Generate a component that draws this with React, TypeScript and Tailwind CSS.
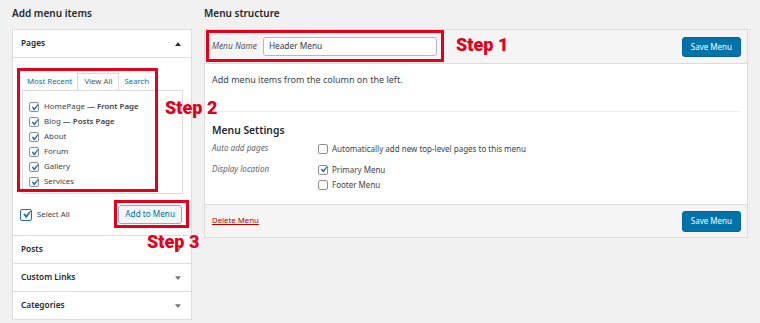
import React from 'react'

function Checkbox({ checked = false, big = false }: { checked?: boolean; big?: boolean }) {
  return (
    <span
      className={
        big
          ? 'relative inline-flex items-center justify-center w-[12px] h-[12px] border border-[#2271b1] rounded-[2px] bg-white shrink-0'
          : 'relative inline-flex items-center justify-center w-[10px] h-[10px] border border-[#8c8f94] rounded-[2px] bg-white shrink-0'
      }
    >
      {checked && (
        <svg viewBox="0 0 20 20" className={big ? 'absolute w-[15px] h-[15px]' : 'absolute w-[13px] h-[13px]'}>
          <path d="M14.83 4.89l1.34.94-5.81 8.38H9.02L5.78 9.67l1.34-1.25 2.57 2.4z" fill="#2271b1" />
        </svg>
      )}
    </span>
  )
}

function Caret({ up = false }: { up?: boolean }) {
  return (
    <svg viewBox="0 0 8 5" className="w-[6px] h-[4px]">
      {up ? <path d="M0 5L4 0L8 5Z" fill="#23282d" /> : <path d="M0 0L8 0L4 5Z" fill="#72777c" />}
    </svg>
  )
}

const pages = [
  { label: 'HomePage', suffix: 'Front Page' },
  { label: 'Blog', suffix: 'Posts Page' },
  { label: 'About' },
  { label: 'Forum' },
  { label: 'Gallery' },
  { label: 'Services' },
]

export default function App() {
  return (
    <div
      className="relative w-[760px] h-[323px] bg-[#f1f1f1] text-[#3c434a] overflow-hidden"
      style={{ fontFamily: '"Noto Sans", "Open Sans", sans-serif' }}
    >
      <div className="flex gap-[12px] pl-[12px]">
        {/* Left column */}
        <div className="w-[180px]">
          <h2 className="h-[29px] pt-[5px] text-[10px] leading-[16px] font-semibold text-[#23282d]">Add menu items</h2>
          <div className="border border-[#dcdcde] bg-white">
            <div className="h-[28px] flex items-center justify-between pl-[8px] pr-[10px] border-b border-[#dcdcde]">
              <span className="text-[8.3px] font-semibold text-[#23282d]">Pages</span>
              <Caret up />
            </div>
            <div className="pl-[9px] pt-[15px]">
              <div className="flex text-[7.8px] h-[17px] items-stretch">
                <span className="px-[5px] flex items-center text-[#0073aa]">Most Recent</span>
                <span className="px-[6px] flex items-center text-[#555] bg-white border border-b-0 border-[#dcdcde]">View All</span>
                <span className="px-[5px] flex items-center text-[#0073aa]">Search</span>
              </div>
              <div className="w-[161px] h-[104px] border border-[#dcdcde] pt-[11px] pl-[6px] flex flex-col gap-[5px]">
                {pages.map((p) => (
                  <div key={p.label} className="flex items-center gap-[5px] h-[10px] text-[7.9px]">
                    <Checkbox checked />
                    <span>
                      {p.label}
                      {p.suffix && <span className="font-semibold"> — {p.suffix}</span>}
                    </span>
                  </div>
                ))}
              </div>
            </div>
            <div className="flex items-center justify-between pl-[7px] pr-[9px] pt-[11px] pb-[11px]">
              <div className="flex items-center gap-[5px] text-[7.8px]">
                <Checkbox checked big />
                <span>Select All</span>
              </div>
              <button className="h-[19px] px-[6px] text-[8.2px] text-[#0071a1] bg-[#f3f5f6] border border-[#7fb2cf] rounded-[3px]">
                Add to Menu
              </button>
            </div>
            {['Posts', 'Custom Links', 'Categories'].map((t) => (
              <div key={t} className="h-[28px] flex items-center justify-between pl-[8px] pr-[10px] border-t border-[#dcdcde]">
                <span className="text-[8.3px] font-semibold text-[#23282d]">{t}</span>
                <Caret />
              </div>
            ))}
          </div>
        </div>

        {/* Right column */}
        <div className="w-[544px]">
          <h2 className="h-[29px] pt-[5px] text-[10px] leading-[16px] font-semibold text-[#23282d]">Menu structure</h2>
          <div className="border border-[#dcdcde] bg-white">
            <div className="h-[34px] flex items-center justify-between pl-[7px] pr-[6px] bg-[#f5f5f5] border-b border-[#dcdcde]">
              <div className="flex items-center gap-[6px]">
                <span className="text-[8.3px] italic text-[#555]">Menu Name</span>
                <div className="w-[174px] h-[19px] flex items-center px-[5px] bg-white border border-[#b4b9be] rounded-[3px] text-[8.3px] text-[#32373c]">
                  Header Menu
                </div>
              </div>
              <button className="h-[20px] px-[8px] text-[8px] text-white bg-[#0073aa] border border-[#006799] rounded-[3px]">
                Save Menu
              </button>
            </div>
            <div className="px-[7px]">
              <p className="pt-[10px] h-[47px] text-[9px] leading-[12px]">Add menu items from the column on the left.</p>
              <div className="border-t border-[#eeeeee] pt-[10px] pb-[13px]">
                <h3 className="text-[10.3px] leading-[16px] font-semibold text-[#23282d]">Menu Settings</h3>
                <div className="flex mt-[4px] h-[13px] items-center">
                  <span className="w-[106px] text-[8.1px] italic text-[#666]">Auto add pages</span>
                  <div className="flex items-center gap-[4px] text-[8px]">
                    <Checkbox />
                    <span>Automatically add new top-level pages to this menu</span>
                  </div>
                </div>
                <div className="flex mt-[8px]">
                  <span className="w-[106px] h-[13px] flex items-center text-[8.1px] italic text-[#666]">Display location</span>
                  <div className="flex flex-col gap-[2px] text-[8px]">
                    <div className="flex items-center gap-[4px] h-[13px]">
                      <Checkbox checked />
                      <span>Primary Menu</span>
                    </div>
                    <div className="flex items-center gap-[4px] h-[13px]">
                      <Checkbox />
                      <span>Footer Menu</span>
                    </div>
                  </div>
                </div>
              </div>
            </div>
            <div className="h-[33px] flex items-center justify-between pl-[7px] pr-[6px] bg-[#f5f5f5] border-t border-[#dcdcde]">
              <span className="text-[7.8px] text-[#a00] underline">Delete Menu</span>
              <button className="h-[21px] px-[8px] text-[8px] text-white bg-[#0073aa] border border-[#006799] rounded-[3px]">
                Save Menu
              </button>
            </div>
          </div>
        </div>
      </div>

      {/* Annotations */}
      <div className="absolute left-[206px] top-[30px] w-[238px] h-[32px] border-[3px] border-[#e2001a]" />
      <div className="absolute left-[17px] top-[68px] w-[141px] h-[124px] border-[3px] border-[#e2001a]" />
      <div className="absolute left-[114px] top-[200px] w-[75px] h-[28px] border-[3px] border-[#e2001a]" />
      <span
        className="absolute left-[456px] top-[34px] text-[18px] font-black leading-[22px] text-[#e2001a]"
        style={{ fontFamily: 'Roboto, sans-serif' }}
      >
        Step 1
      </span>
      <span
        className="absolute left-[165px] top-[97px] text-[18px] font-black leading-[22px] text-[#e2001a]"
        style={{ fontFamily: 'Roboto, sans-serif' }}
      >
        Step 2
      </span>
      <span
        className="absolute left-[147px] top-[231px] text-[18px] font-black leading-[22px] text-[#e2001a]"
        style={{ fontFamily: 'Roboto, sans-serif' }}
      >
        Step 3
      </span>
    </div>
  )
}
